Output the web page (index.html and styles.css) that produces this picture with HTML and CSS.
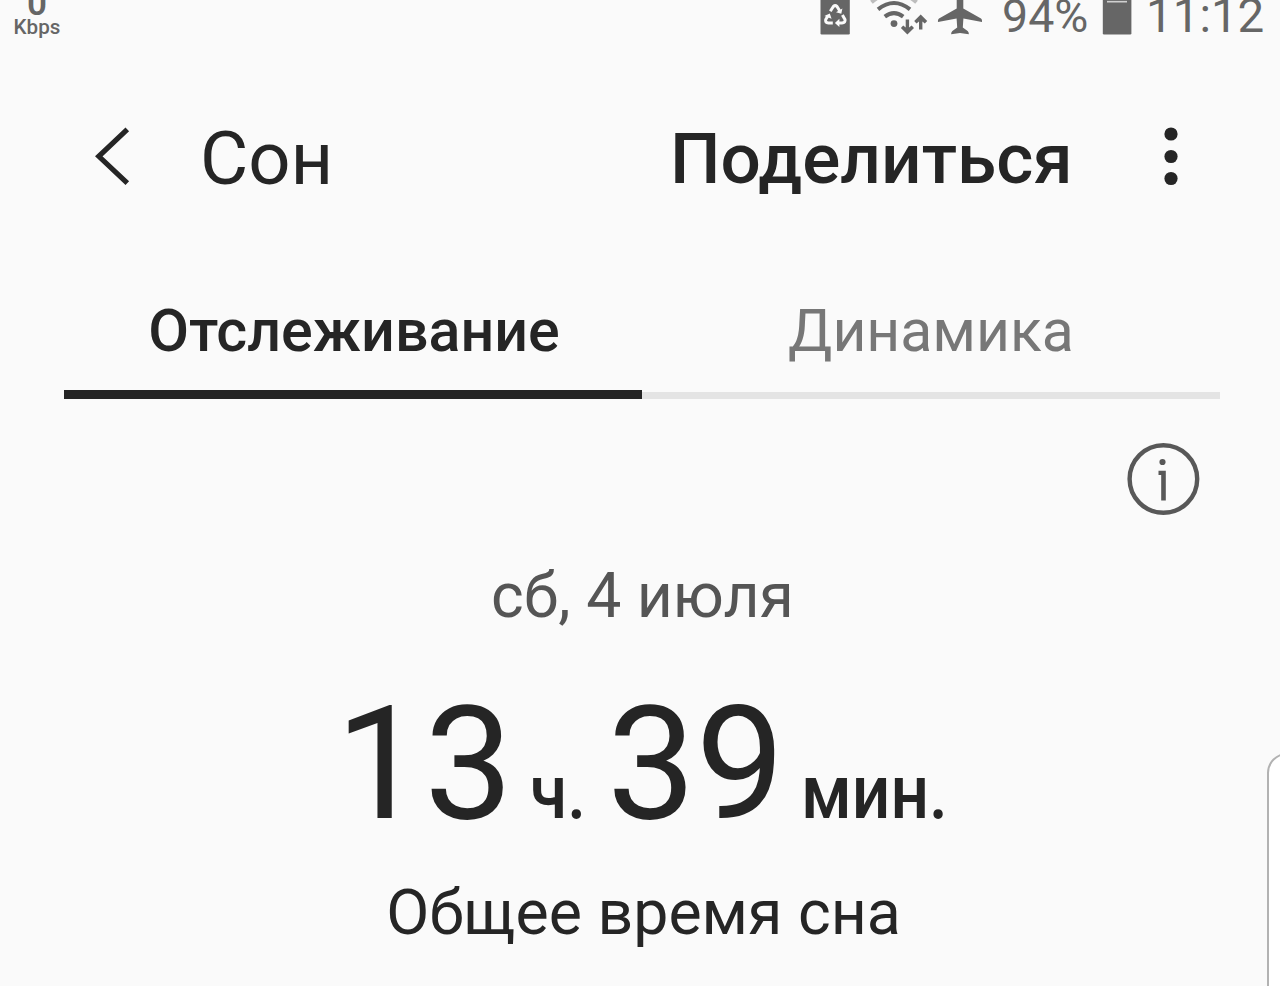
FILE: index.html
```html
<!DOCTYPE html>
<html lang="ru">
<head>
<meta charset="utf-8">
<title>Сон</title>
<link rel="stylesheet" href="styles.css">
</head>
<body>
<div class="screen">
  <div class="status">
    <div class="net"><span class="net-value">0</span><span class="net-unit">Kbps</span></div>
    <div class="indicators">
      <svg class="ic-saver" width="30" height="36" viewBox="820 0 30 36">
        <path d="M820.5 -4H849.8V33.3Q849.8 34.5 848.6 34.5H821.7Q820.5 34.5 820.5 33.3Z" fill="#666"/>
        <g fill="none" stroke="#fafafa" stroke-width="3">
          <path d="M830.3 11.2L833.4 6.4Q835.2 4.8 837 6.4L839.8 11"/>
          <path d="M842.4 15L845 19.6Q845.6 22.8 842 23H838.5"/>
          <path d="M832.8 23H828.4Q824.9 22.8 825.7 19.6L828.2 15.4"/>
        </g>
        <path d="M842.4 8.6L841.3 13.8L836 12.2ZM839.4 18.8V27L834.9 22.9ZM824.4 16L829.8 13.6L831.6 18.8Z" fill="#fafafa"/>
      </svg>
      <svg class="ic-wifi" width="58" height="36" viewBox="870 0 58 36">
        <g fill="none" stroke="#666" stroke-width="4">
          <path d="M884.8 16.7Q894 9.6 903.2 16.7"/>
          <path d="M878 9.4Q894 -3.4 910 9.4"/>
          <path d="M871.5 2.2Q894 -17 916.5 2.2" stroke="#bdbdbd"/>
        </g>
        <circle cx="894" cy="23.6" r="3.4" fill="#666"/>
        <path d="M905.7 19.5H909.1V27.6L911.6 25.6L914 28L907.4 34.4L900.9 28L903.2 25.6L905.7 27.6Z" fill="#666"/>
        <path d="M919 29.5H922.4V21.4L924.8 23.4L927.2 21L920.7 14.6L914.2 21L916.5 23.4L919 21.4Z" fill="#666"/>
      </svg>
      <svg class="ic-plane" width="46" height="36" viewBox="937 0 46 36">
        <path d="M956.7 -4H963.3V8.5L981 18.5Q982.3 19.3 982 22L963.4 18.6L962.8 27.6L967.6 31Q969 32.2 968.8 34.2L960 33L951.2 34.2Q951 32.2 952.4 31L957.2 27.6L956.6 18.6L938 22Q937.7 19.3 939 18.5L956.7 8.5Z" fill="#666"/>
      </svg>
      <span class="percent">94%</span>
      <svg class="ic-battery" width="30" height="36" viewBox="1102 0 30 36">
        <path d="M1102.8 -4H1131.4V33.3Q1131.4 34.5 1130.2 34.5H1104Q1102.8 34.5 1102.8 33.3Z" fill="#666"/>
        <path d="M1107 1.7H1127" stroke="#d0d0d0" stroke-width="1.6"/>
      </svg>
      <span class="clock">11:12</span>
    </div>
  </div>

  <div class="header">
    <svg class="ic-back" width="40" height="64" viewBox="92 124 40 64">
      <path d="M127.3 129.3L98.8 156.3L127.3 183.2" fill="none" stroke="#252525" stroke-width="5.2"/>
    </svg>
    <span class="title">Сон</span>
    <span class="share">Поделиться</span>
    <svg class="ic-more" width="16" height="64" viewBox="0 0 16 64" fill="#252525">
      <circle cx="8" cy="8" r="6.6"/><circle cx="8" cy="30.5" r="6.6"/><circle cx="8" cy="52.5" r="6.6"/>
    </svg>
  </div>

  <div class="tabs">
    <div class="tab tab-active">Отслеживание</div>
    <div class="tab">Динамика</div>
  </div>

  <div class="info-row">
    <svg width="74" height="74" viewBox="0 0 74 74">
      <circle cx="37.4" cy="37" r="33.8" fill="none" stroke="#585858" stroke-width="4.4"/>
      <circle cx="36.5" cy="20" r="3.1" fill="#585858"/>
      <path d="M32.5 28.8H39.8V58.5H35.2V33H32.5Z" fill="#585858"/>
    </svg>
  </div>

  <div class="date">сб, 4 июля</div>
  <div class="duration">
    <span class="num">13</span><span class="unit unit-h">ч.</span><span class="num">39</span><span class="unit unit-m">мин.</span>
  </div>
  <div class="caption">Общее время сна</div>
  <div class="edge-panel"></div>
</div>
</body>
</html>
```
FILE: styles.css
```css
* { box-sizing: border-box; }
body { margin: 0; background: #fafafa; font-family: Roboto, sans-serif; color: #252525; }
svg { display: block; flex: none; }
.screen { position: relative; width: 1280px; height: 986px; overflow: hidden; background: #fafafa; white-space: nowrap; }

.status { display: flex; justify-content: space-between; height: 98px; color: #666; }
.net { display: flex; flex-direction: column; align-items: center; gap: 8px; width: 74px; }
.net-value { font-size: 35px; font-weight: 600; line-height: 8px; }
.net-unit { font-size: 20.6px; font-weight: 500; line-height: 22px; }
.indicators { display: flex; width: 460px; height: 36px; font-size: 46.5px; line-height: 32px; }
.ic-wifi { margin-left: 20px; }
.ic-plane { margin-left: 9px; }
.percent { width: 100px; margin-left: 19px; }
.clock { margin-left: 14px; font-size: 47.5px; }

.header { display: flex; align-items: center; height: 120px; padding-left: 92px; }
.ic-back { margin-top: -4px; }
.title { width: 538px; padding-left: 68px; font-size: 74.2px; }
.share { width: 492.5px; padding-top: 1px; font-size: 71.1px; font-weight: 500; }

.tabs { display: flex; height: 181px; padding: 52px 60px 0 64px; }
.tab { width: 578px; height: 129px; font-size: 58.9px; line-height: 122px; text-align: center; color: #777; background: linear-gradient(#e4e4e4, #e4e4e4) 0 100% / 100% 7px no-repeat; }
.tab-active { padding-left: 2px; font-size: 59.2px; font-weight: 500; color: #252525; background: linear-gradient(#252525, #252525) 0 100% / 100% 9px no-repeat; }

.info-row { display: flex; justify-content: flex-end; height: 156px; padding: 43px 80px 0 0; }
.date { height: 80px; font-size: 62.5px; line-height: 82px; text-align: center; padding-left: 5px; color: #555; }
.duration { display: flex; align-items: baseline; height: 232px; padding: 39px 0 0 335.5px; }
.num { width: 178px; font-size: 158px; line-height: 180px; }
.num:first-child { width: 180px; }
.unit { font-size: 76px; line-height: 90px; font-weight: 500; transform: scaleX(.89); transform-origin: 0 100%; }
.unit-h { width: 77.5px; margin-left: 14px; }
.unit-m { margin-left: 16px; }
.caption { height: 90px; font-size: 62.6px; line-height: 92px; text-align: center; padding-left: 7px; }

.edge-panel { position: absolute; left: 1267px; top: 753px; width: 60px; height: 260px; border: 2px solid #b2b2b2; border-radius: 20px; background: #fff; }
```
